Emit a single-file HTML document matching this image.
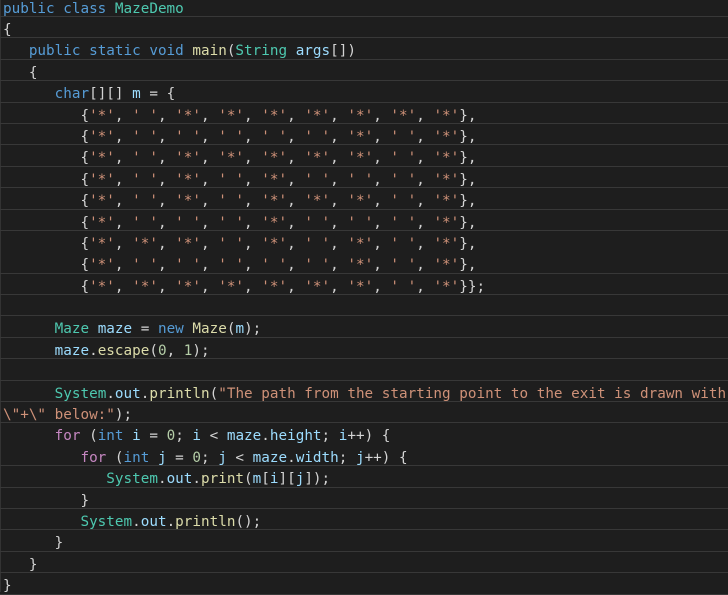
<!DOCTYPE html>
<html><head><meta charset="utf-8"><style>
html,body{margin:0;padding:0;background:#1e1e1e;width:728px;height:592px;overflow:hidden}
#c{position:absolute;left:3px;top:-4.4px;font-family:"DejaVu Sans Mono","Liberation Mono",monospace;font-size:14.3px;color:#d4d4d4}
.l{white-space:pre;height:21.4px;line-height:20px;padding-top:3px;box-sizing:border-box;border-bottom:1px solid #383838;width:740px;margin-left:-3px;padding-left:3px;overflow:hidden}
.n{border-bottom-color:transparent}
.k{color:#569cd6}.t{color:#4ec9b0}.f{color:#dcdcaa}.v{color:#9cdcfe}.s{color:#ce9178}.d{color:#b5cea8}.p{color:#c586c0}
#vb{position:absolute;left:0;top:0;width:1px;height:592px;background:#333}
</style></head><body><div id="vb"></div><div id="c">
<div class="l"><span class="k">public class</span> <span class="t">MazeDemo</span></div>
<div class="l">{</div>
<div class="l">   <span class="k">public static void</span> <span class="f">main</span>(<span class="t">String</span> <span class="v">args</span>[])</div>
<div class="l">   {</div>
<div class="l">      <span class="k">char</span>[][] <span class="v">m</span> = {</div>
<div class="l">         {<span class="s">'*'</span>, <span class="s">' '</span>, <span class="s">'*'</span>, <span class="s">'*'</span>, <span class="s">'*'</span>, <span class="s">'*'</span>, <span class="s">'*'</span>, <span class="s">'*'</span>, <span class="s">'*'</span>},</div>
<div class="l">         {<span class="s">'*'</span>, <span class="s">' '</span>, <span class="s">' '</span>, <span class="s">' '</span>, <span class="s">' '</span>, <span class="s">' '</span>, <span class="s">'*'</span>, <span class="s">' '</span>, <span class="s">'*'</span>},</div>
<div class="l">         {<span class="s">'*'</span>, <span class="s">' '</span>, <span class="s">'*'</span>, <span class="s">'*'</span>, <span class="s">'*'</span>, <span class="s">'*'</span>, <span class="s">'*'</span>, <span class="s">' '</span>, <span class="s">'*'</span>},</div>
<div class="l">         {<span class="s">'*'</span>, <span class="s">' '</span>, <span class="s">'*'</span>, <span class="s">' '</span>, <span class="s">'*'</span>, <span class="s">' '</span>, <span class="s">' '</span>, <span class="s">' '</span>, <span class="s">'*'</span>},</div>
<div class="l">         {<span class="s">'*'</span>, <span class="s">' '</span>, <span class="s">'*'</span>, <span class="s">' '</span>, <span class="s">'*'</span>, <span class="s">'*'</span>, <span class="s">'*'</span>, <span class="s">' '</span>, <span class="s">'*'</span>},</div>
<div class="l">         {<span class="s">'*'</span>, <span class="s">' '</span>, <span class="s">' '</span>, <span class="s">' '</span>, <span class="s">'*'</span>, <span class="s">' '</span>, <span class="s">' '</span>, <span class="s">' '</span>, <span class="s">'*'</span>},</div>
<div class="l n">         {<span class="s">'*'</span>, <span class="s">'*'</span>, <span class="s">'*'</span>, <span class="s">' '</span>, <span class="s">'*'</span>, <span class="s">' '</span>, <span class="s">'*'</span>, <span class="s">' '</span>, <span class="s">'*'</span>},</div>
<div class="l">         {<span class="s">'*'</span>, <span class="s">' '</span>, <span class="s">' '</span>, <span class="s">' '</span>, <span class="s">' '</span>, <span class="s">' '</span>, <span class="s">'*'</span>, <span class="s">' '</span>, <span class="s">'*'</span>},</div>
<div class="l">         {<span class="s">'*'</span>, <span class="s">'*'</span>, <span class="s">'*'</span>, <span class="s">'*'</span>, <span class="s">'*'</span>, <span class="s">'*'</span>, <span class="s">'*'</span>, <span class="s">' '</span>, <span class="s">'*'</span>}};</div>
<div class="l"> </div>
<div class="l">      <span class="t">Maze</span> <span class="v">maze</span> = <span class="k">new</span> <span class="f">Maze</span>(<span class="v">m</span>);</div>
<div class="l">      <span class="v">maze</span>.<span class="f">escape</span>(<span class="d">0</span>, <span class="d">1</span>);</div>
<div class="l"> </div>
<div class="l">      <span class="t">System</span>.<span class="v">out</span>.<span class="f">println</span>(<span class="s">"The path from the starting point to the exit is drawn with</span></div>
<div class="l"><span class="s">\"+\" below:"</span>);</div>
<div class="l n">      <span class="p">for</span> (<span class="k">int</span> <span class="v">i</span> = <span class="d">0</span>; <span class="v">i</span> &lt; <span class="v">maze</span>.<span class="v">height</span>; <span class="v">i</span>++) {</div>
<div class="l">         <span class="p">for</span> (<span class="k">int</span> <span class="v">j</span> = <span class="d">0</span>; <span class="v">j</span> &lt; <span class="v">maze</span>.<span class="v">width</span>; <span class="v">j</span>++) {</div>
<div class="l">            <span class="t">System</span>.<span class="v">out</span>.<span class="f">print</span>(<span class="v">m</span>[<span class="v">i</span>][<span class="v">j</span>]);</div>
<div class="l">         }</div>
<div class="l">         <span class="t">System</span>.<span class="v">out</span>.<span class="f">println</span>();</div>
<div class="l">      }</div>
<div class="l">   }</div>
<div class="l">}</div>
</div></body></html>
